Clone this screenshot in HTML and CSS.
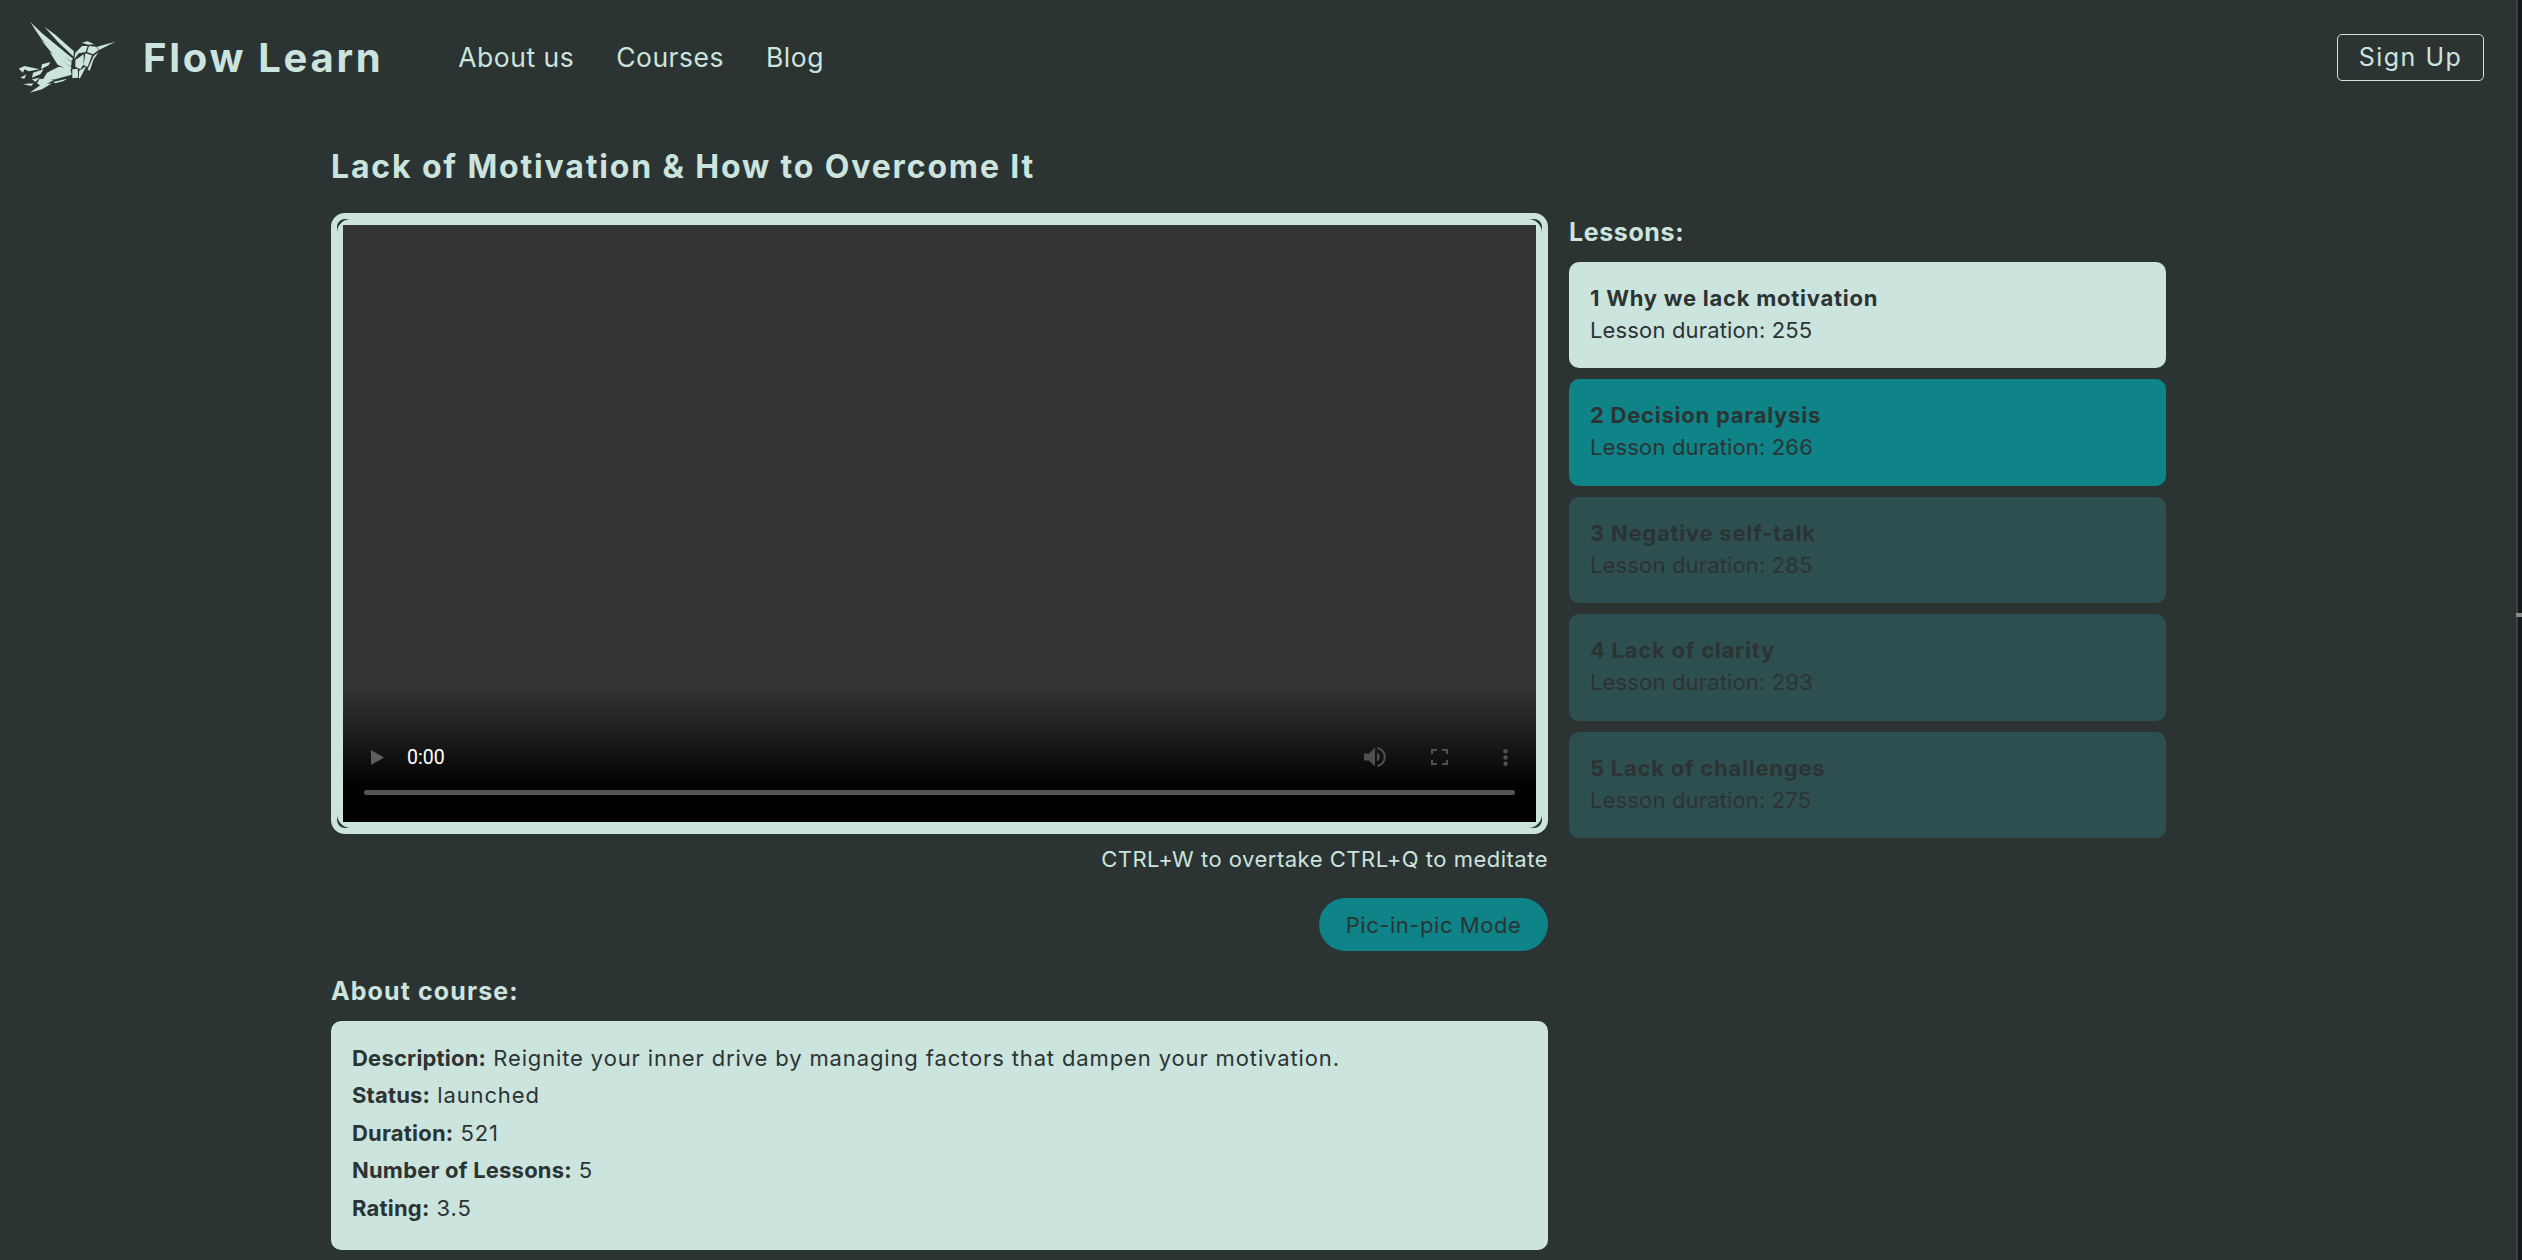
FILE: index.html
```html
<!DOCTYPE html>
<html lang="en">

<head>
    <meta charset="UTF-8">
    <title>Flow Learn</title>
    <link rel="stylesheet" href="styles.css">
</head>

<body>
    <header class="topbar">
        <a class="brand" href="#">
            <svg class="brand-logo" viewBox="50 35 300 216" fill="#cbe4de">
                <polygon points="90,38 125,72 218,148 213,156 150,118 124,90 105,62" />
                <polygon points="132,52 165,76 220,125 220,142 175,100" />
                <polygon points="122,92 150,112 214,158 212,172 160,138" />
                <polygon points="148,128 178,146 214,175 208,184 172,166" />
                <polygon points="244,100 262,96 282,105 264,106" />
                <polygon points="222,150 225,130 245,110 262,110 256,128 235,132" />
                <polygon points="266,110 288,112 295,122 278,135 260,128" />
                <polygon points="290,112 345,97 296,122" />
                <polygon points="280,140 295,128 280,150 268,185 262,180" />
                <polygon points="255,132 275,138 262,172 250,168" />
                <polygon points="225,152 250,135 250,165 240,180 225,172" />
                <polygon points="140,190 175,172 210,178 214,196 165,210 125,215" />
                <polygon points="216,180 232,178 234,205 216,206" />
                <polygon points="236,185 258,170 240,205 236,208" />
                <polygon points="125,165 150,158 145,168 122,180" />
                <polygon points="55,178 72,170 118,180 85,186 72,180 68,190" />
                <polygon points="98,190 130,180 120,195 95,205" />
                <polygon points="60,205 78,195 72,208" />
                <polygon points="95,210 118,205 105,218" />
                <polygon points="68,224 100,222 92,230" />
                <polygon points="118,208 160,212 125,232 110,222" />
                <polygon points="158,218 200,208 190,215 165,222" />
                <polygon points="88,250 122,226 155,222 125,240 96,248" />
            </svg>
            <span class="brand-name">Flow Learn</span>
        </a>
        <nav class="nav-links">
            <a href="#">About us</a>
            <a href="#">Courses</a>
            <a href="#">Blog</a>
        </nav>
        <button class="signup-btn">Sign Up</button>
    </header>

    <main class="course-page">
        <h1 class="course-title">Lack of Motivation &amp; How to Overcome It</h1>

        <div class="course-grid">
            <section class="player-col">
                <div class="video-frame">
                    <div class="video-edge">
                        <div class="video">
                            <div class="video-controls">
                                <div class="control-row">
                                    <svg class="icon-play" viewBox="0 0 13 15" fill="#5f5f5f">
                                        <polygon points="0,0 13,7.5 0,15" />
                                    </svg>
                                    <span class="video-time">0:00</span>
                                    <svg class="icon-volume" viewBox="0 0 22 20" fill="#505050">
                                        <polygon points="0,6.5 5,6.5 11,0.5 11,19.5 5,13.5 0,13.5" />
                                        <path d="M13 5.5a5 5 0 0 1 0 9z" />
                                        <path d="M13.5 1a9.2 9.2 0 0 1 0 18" fill="none" stroke="#505050" stroke-width="2" />
                                    </svg>
                                    <svg class="icon-full" viewBox="0 0 17 16" fill="none" stroke="#505050" stroke-width="2.2">
                                        <path d="M1 5V1h5M11 1h5v4M16 11v4h-5M6 15H1v-4" />
                                    </svg>
                                    <svg class="icon-more" viewBox="0 0 5 17" fill="#505050">
                                        <circle cx="2.5" cy="2.2" r="2.2" />
                                        <circle cx="2.5" cy="8.5" r="2.2" />
                                        <circle cx="2.5" cy="14.8" r="2.2" />
                                    </svg>
                                </div>
                                <div class="timeline"></div>
                            </div>
                        </div>
                    </div>
                </div>

                <p class="shortcut-hint">CTRL+W to overtake CTRL+Q to meditate</p>

                <div class="pip-row">
                    <button class="pip-btn">Pic-in-pic Mode</button>
                </div>

                <h3 class="section-label label-about">About course:</h3>
                <div class="about-box">
                    <p><b>Description:</b> Reignite your inner drive by managing factors that dampen your motivation.</p>
                    <p><b>Status:</b> launched</p>
                    <p><b>Duration:</b> 521</p>
                    <p><b>Number of Lessons:</b> 5</p>
                    <p><b>Rating:</b> 3.5</p>
                </div>
            </section>

            <aside class="lessons-col">
                <h3 class="section-label">Lessons:</h3>
                <div class="lesson lesson-active">
                    <h4>1 Why we lack motivation</h4>
                    <p>Lesson duration: 255</p>
                </div>
                <div class="lesson lesson-open">
                    <h4>2 Decision paralysis</h4>
                    <p>Lesson duration: 266</p>
                </div>
                <div class="lesson">
                    <h4>3 Negative self-talk</h4>
                    <p>Lesson duration: 285</p>
                </div>
                <div class="lesson">
                    <h4>4 Lack of clarity</h4>
                    <p>Lesson duration: 293</p>
                </div>
                <div class="lesson">
                    <h4>5 Lack of challenges</h4>
                    <p>Lesson duration: 275</p>
                </div>
            </aside>
        </div>
    </main>

    <div class="scroll-strip">
        <div class="scroll-thumb"></div>
    </div>
</body>

</html>
```

FILE: styles.css
```css
html {
    overflow: hidden;
}

body {
    margin: 0;
    height: 1260px;
    background-color: #2c3333;
    color: #cbe4de;
    font-family: Inter, "Liberation Sans", sans-serif;
}

a {
    color: inherit;
    text-decoration: none;
}

h1, h3, h4, p {
    margin: 0;
}

/* top bar */
.topbar {
    display: flex;
    align-items: center;
    height: 114px;
    padding: 0 38px 0 17px;
}

.brand {
    display: flex;
    align-items: center;
}

.brand-logo {
    width: 100px;
    height: 72px;
}

.brand-name {
    margin-left: 26px;
    font-size: 40px;
    font-weight: 700;
    letter-spacing: 2.7px;
}

.nav-links {
    display: flex;
    gap: 42px;
    margin-left: 75px;
    font-size: 26.5px;
    letter-spacing: 0.5px;
}

.signup-btn {
    width: 147px;
    height: 47px;
    margin-left: auto;
    padding: 0;
    background: none;
    border: 1.6px solid #cbe4de;
    border-radius: 5px;
    color: #cbe4de;
    font-family: inherit;
    font-size: 25px;
    letter-spacing: 1.5px;
}

/* course */
.course-page {
    padding-left: 331px;
}

.course-title {
    height: 99px;
    padding-top: 33px;
    box-sizing: border-box;
    font-size: 32px;
    line-height: 40px;
    font-weight: 700;
    letter-spacing: 1.85px;
}

.course-grid {
    display: grid;
    grid-template-columns: 1217px 597px;
    column-gap: 21px;
}

.video-frame {
    height: 621px;
    box-sizing: border-box;
    border: 6px solid #cbe4de;
    border-radius: 14px;
    background-color: #2c3333;
}

.video-edge {
    height: 100%;
    box-sizing: border-box;
    border: 6px solid #cbe4de;
    border-radius: 14px;
    background-color: #cbe4de;
}

.video {
    display: flex;
    align-items: flex-end;
    height: 100%;
    background: linear-gradient(to bottom, #333333 465px, #000000 565px);
}

.video-controls {
    width: 100%;
    padding: 0 21px 27px;
    box-sizing: border-box;
}

.control-row {
    display: flex;
    align-items: center;
    height: 24px;
    margin-bottom: 21px;
    padding: 0 7px 0 7px;
}

.icon-play {
    width: 13px;
    height: 15px;
}

.video-time {
    margin-left: 23px;
    color: #ffffff;
    font-family: Roboto, sans-serif;
    font-size: 19.5px;
}

.icon-volume {
    width: 22px;
    height: 20px;
    margin-left: auto;
}

.icon-full {
    width: 17px;
    height: 16px;
    margin-left: 45px;
}

.icon-more {
    width: 5px;
    height: 17px;
    margin-left: 55px;
}

.timeline {
    height: 5px;
    border-radius: 3px;
    background-color: #555555;
}

.shortcut-hint {
    margin-top: 8px;
    line-height: 34px;
    text-align: right;
    font-size: 22px;
    letter-spacing: 0.5px;
}

.pip-row {
    display: flex;
    justify-content: flex-end;
    margin-top: 22px;
}

.pip-btn {
    width: 229px;
    height: 53px;
    padding: 0;
    border: none;
    border-radius: 27px;
    background-color: #0e8388;
    color: #2c3333;
    font-family: inherit;
    font-size: 22px;
    letter-spacing: 0.55px;
}

.section-label {
    height: 38px;
    font-size: 25px;
    line-height: 38px;
    font-weight: 700;
    letter-spacing: 0.6px;
}

.label-about {
    margin-top: 21px;
    margin-bottom: 11px;
    letter-spacing: 1.1px;
}

.about-box {
    height: 229px;
    padding: 19px 21px;
    box-sizing: border-box;
    border-radius: 10px;
    background-color: #cbe4de;
    color: #2c3333;
    font-size: 22px;
    line-height: 37.4px;
    letter-spacing: 0.87px;
}

.about-box b {
    letter-spacing: 0.2px;
}

/* lessons */
.lessons-col {
    display: flex;
    flex-direction: column;
    gap: 11px;
}

.lesson {
    height: 106.4px;
    padding: 20px 21px 0;
    box-sizing: border-box;
    border-radius: 10px;
    background-color: #2e4f4f;
    color: #2c3333;
    font-size: 22px;
    line-height: 32px;
    letter-spacing: 0.15px;
}

.lesson h4 {
    font-size: 22px;
    font-weight: 700;
    letter-spacing: 0.75px;
}

.lesson-active {
    background-color: #cbe4de;
}

.lesson-open {
    background-color: #0e8388;
}

/* browser scrollbar at the window edge */
.scroll-strip {
    position: absolute;
    top: 0;
    right: 0;
    width: 4px;
    height: 1260px;
    border-left: 2px solid #3a3f40;
    background-color: #16191b;
}

.scroll-thumb {
    position: absolute;
    top: 613px;
    left: -2px;
    width: 6px;
    height: 4px;
    background-color: #8a8a8a;
}
```
